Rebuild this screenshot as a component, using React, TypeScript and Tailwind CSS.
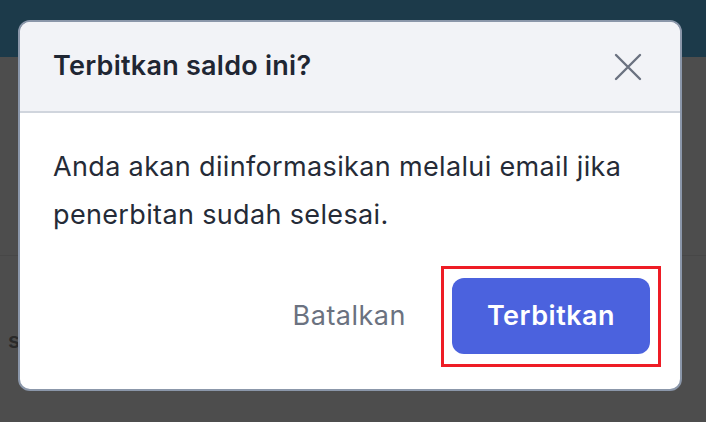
export default function App() {
  return (
    <div className="relative w-[706px] h-[422px] overflow-hidden bg-[#4d4d4d] font-['Inter','Noto_Sans',sans-serif]">
      {/* dimmed page behind the modal */}
      <div className="h-[57px] bg-[#1c3a4a]" />
      <div className="h-[199px] border-b border-[#474747]" />
      <div className="pt-[68px] pl-[8px] text-[22px] font-semibold text-[#2a2a2a]">s</div>

      {/* modal */}
      <div className="absolute left-[18px] top-[20px] w-[664px] h-[371px] rounded-[12px] border-2 border-[#8b97aa] bg-white overflow-hidden flex flex-col">
        <div className="h-[91px] shrink-0 bg-[#f2f3f7] border-b-2 border-[#d0d5dd] flex items-center justify-between pl-[33px] pr-[38px]">
          <h2 className="text-[27px] font-semibold text-[#1f2633] tracking-[0.25px]">Terbitkan saldo ini?</h2>
          <svg width="28" height="28" viewBox="0 0 28 28" fill="none" stroke="#6b7280" strokeWidth="2.4" strokeLinecap="round">
            <path d="M2 2L26 26M26 2L2 26" />
          </svg>
        </div>
        <div className="pl-[33px] pr-[30px] pt-[30px]">
          <p className="text-[27px] leading-[48px] text-[#252b37] tracking-[0.35px]">
            Anda akan diinformasikan melalui email jika
            <br />
            penerbitan sudah selesai.
          </p>
          <div className="mt-[27px] flex items-center justify-end">
            <button className="mr-[35px] text-[27px] text-[#6b7280] tracking-[0.5px]">Batalkan</button>
            <div className="border-[3px] border-[#ee1c25] pt-[9px] pb-[10px] px-[8px] -mr-[11px]">
              <button className="w-[198px] h-[76px] rounded-[12px] bg-[#4b62de] text-white text-[27px] font-semibold tracking-[0.5px]">
                Terbitkan
              </button>
            </div>
          </div>
        </div>
      </div>
    </div>
  );
}
